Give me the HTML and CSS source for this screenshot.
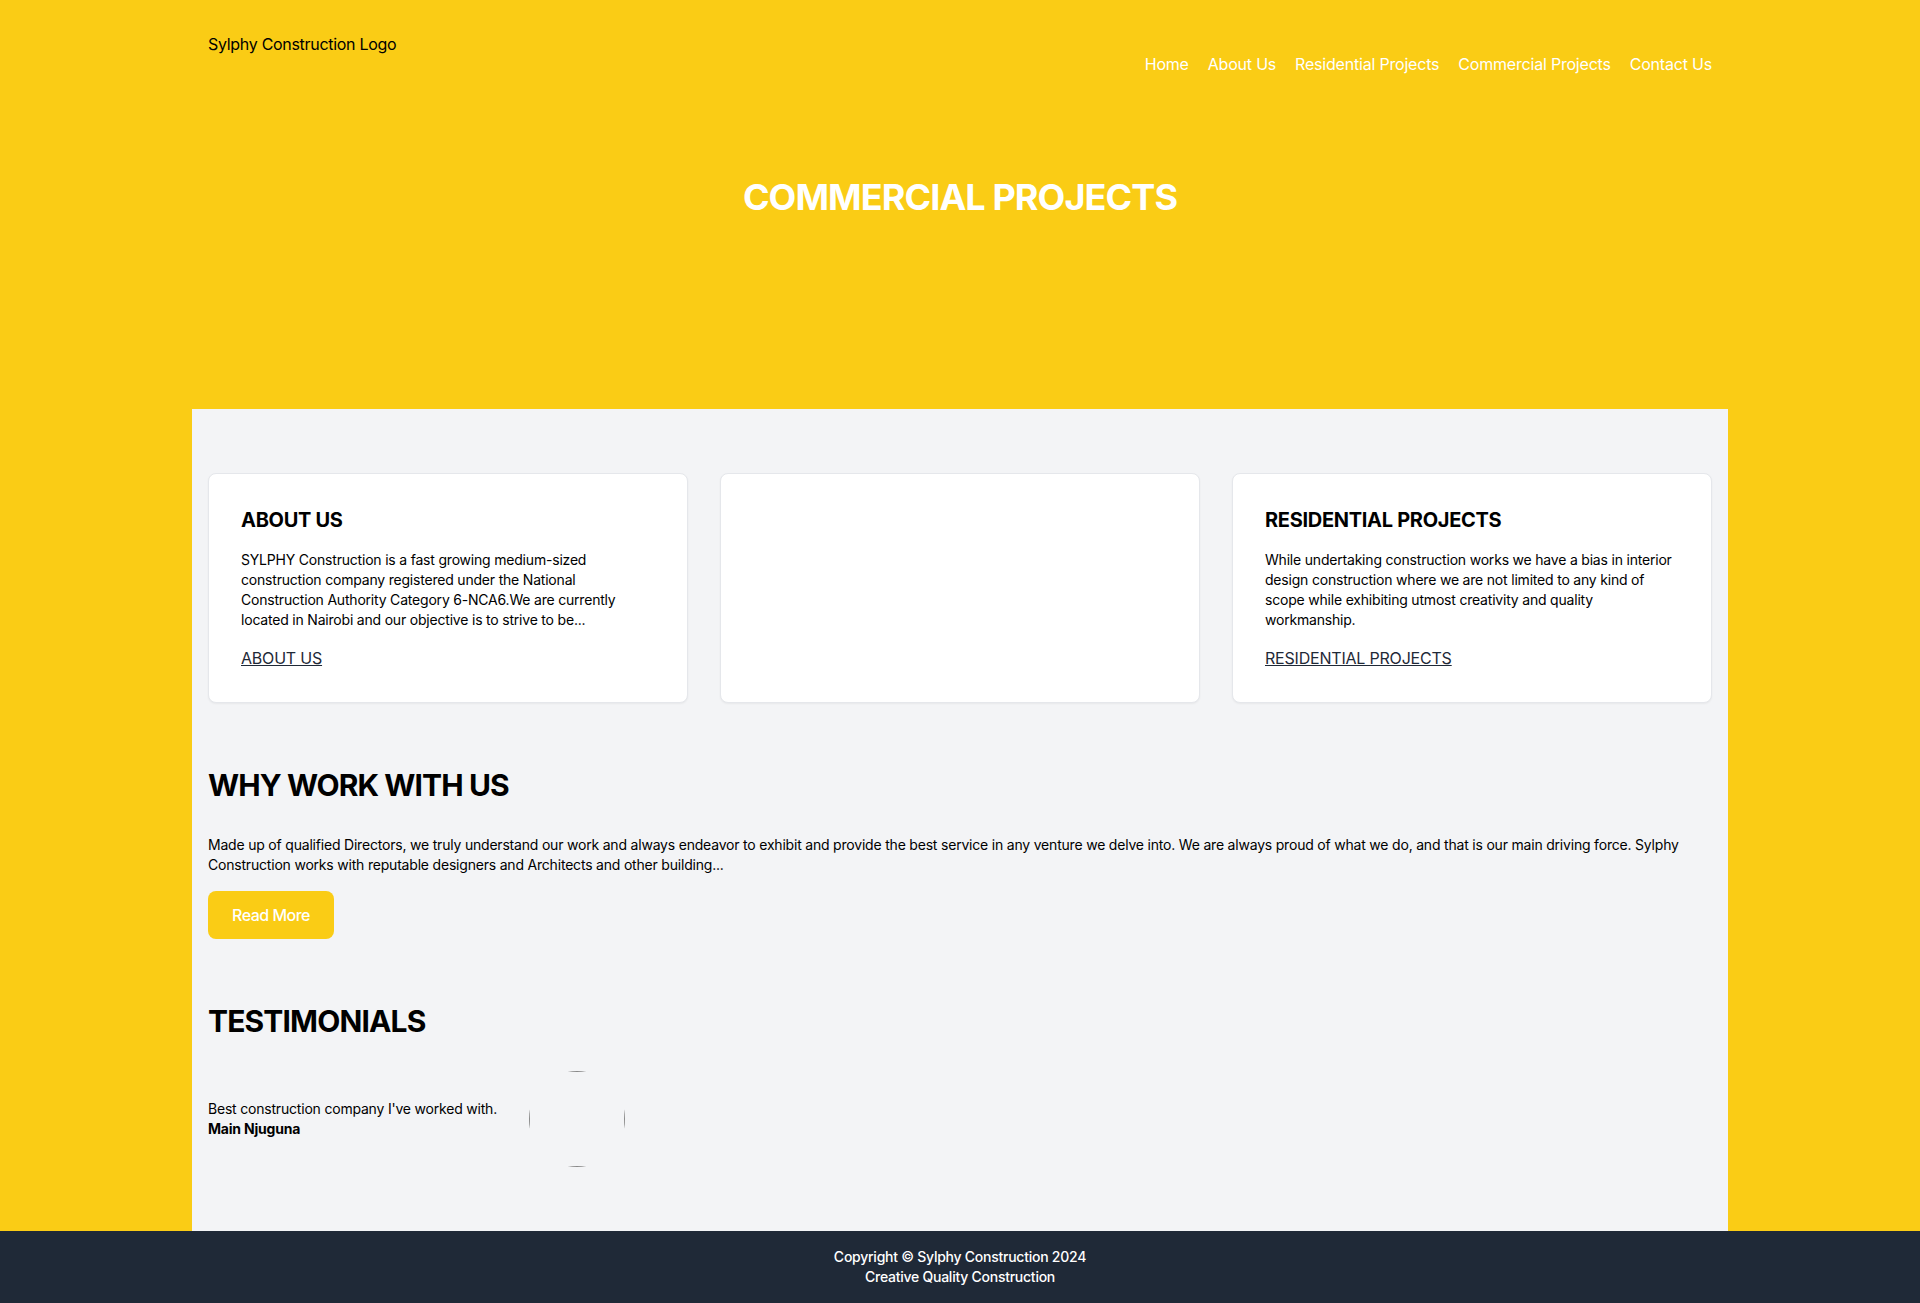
FILE: index.html
```html
<!DOCTYPE html>
<html lang="en">
<head>
<meta charset="utf-8">
<title>Commercial Projects - Sylphy Construction</title>
<link rel="stylesheet" href="styles.css">
</head>
<body>
<div class="page">
  <header class="site-header">
    <div class="logo">Sylphy Construction Logo</div>
    <nav class="nav">
      <a href="#">Home</a>
      <a href="#">About Us</a>
      <a href="#">Residential Projects</a>
      <a href="#">Commercial Projects</a>
      <a href="#">Contact Us</a>
    </nav>
  </header>
  <section class="hero">
    <h1 class="hero-title">COMMERCIAL PROJECTS</h1>
  </section>
  <main class="main">
    <section class="cards">
      <div class="card">
        <h2 class="card-title">ABOUT US</h2>
        <p class="card-text">SYLPHY Construction is a fast growing medium-sized construction company registered under the National Construction Authority Category 6-NCA6.We are currently located in Nairobi and our objective is to strive to be...</p>
        <a class="card-link" href="#">ABOUT US</a>
      </div>
      <div class="card"></div>
      <div class="card">
        <h2 class="card-title">RESIDENTIAL PROJECTS</h2>
        <p class="card-text">While undertaking construction works we have a bias in interior design construction where we are not limited to any kind of scope while exhibiting utmost creativity and quality workmanship.</p>
        <a class="card-link" href="#">RESIDENTIAL PROJECTS</a>
      </div>
    </section>
    <section class="section">
      <h2 class="section-title">WHY WORK WITH US</h2>
      <p class="section-text">Made up of qualified Directors, we truly understand our work and always endeavor to exhibit and provide the best service in any venture we delve into. We are always proud of what we do, and that is our main driving force. Sylphy Construction works with reputable designers and Architects and other building...</p>
      <a class="btn" href="#">Read More</a>
    </section>
    <section class="section">
      <h2 class="section-title section-title-tight">TESTIMONIALS</h2>
      <div class="testimonial">
        <div class="testimonial-body">
          <p class="quote">Best construction company I've worked with.</p>
          <p class="author">Main Njuguna</p>
        </div>
        <div class="avatar"><div class="avatar-frame"></div></div>
      </div>
    </section>
  </main>
</div>
<footer class="footer">
  <p>Copyright © Sylphy Construction 2024</p>
  <p>Creative Quality Construction</p>
</footer>
</body>
</html>
```

FILE: styles.css
```css
* { box-sizing: border-box; }
html, body { margin: 0; padding: 0; }
body {
  background: #facc15;
  font-family: Inter, "Noto Sans", "Liberation Sans", sans-serif;
  color: #000;
}
p, h1, h2 { margin: 0; }

.page {
  width: 1536px;
  margin: 0 auto;
}

.site-header {
  display: flex;
  justify-content: space-between;
  align-items: flex-start;
  padding: 32px 16px 0;
}
.logo {
  font-size: 16px;
  line-height: 24px;
  letter-spacing: -0.3px;
  color: #000;
}
.nav {
  display: flex;
  gap: 19px;
  margin-top: 20px;
}
.nav a {
  color: #fff;
  text-decoration: none;
  font-size: 16px;
  line-height: 24px;
  font-weight: 400;
  letter-spacing: -0.2px;
}

.hero {
  height: 333px;
  padding-top: 101px;
}
.hero-title {
  text-align: center;
  color: #fff;
  font-size: 36px;
  line-height: 40px;
  font-weight: 700;
  letter-spacing: -0.9px;
}

.main {
  background: #f3f4f6;
  padding: 32px 16px 32px;
}

.cards {
  display: grid;
  grid-template-columns: repeat(3, 1fr);
  gap: 32px;
  padding: 32px 0;
}
.card {
  background: #fff;
  border: 1px solid #e5e7eb;
  border-radius: 8px;
  box-shadow: 0 1px 2px rgba(0,0,0,0.05);
  padding: 32px 32px 30px;
  min-height: 230px;
}
.card-title {
  font-size: 20px;
  line-height: 28px;
  font-weight: 700;
  letter-spacing: -0.3px;
  margin-bottom: 16px;
}
.card-text {
  font-size: 14px;
  line-height: 20px;
  letter-spacing: -0.2px;
  margin-bottom: 16px;
  color: #000;
}
.card-link {
  display: inline-block;
  font-size: 16px;
  line-height: 24px;
  letter-spacing: -0.2px;
  color: #1f2937;
  text-decoration: underline;
}

.section {
  padding: 32px 0;
}
.section-title {
  font-size: 30px;
  line-height: 36px;
  font-weight: 700;
  letter-spacing: -0.9px;
  margin-bottom: 32px;
}
.section-title-tight {
  letter-spacing: -0.85px;
}
.section-text {
  font-size: 14px;
  line-height: 20px;
  letter-spacing: -0.2px;
  margin-bottom: 16px;
}
.btn {
  display: inline-block;
  background: #facc15;
  color: #fff;
  text-decoration: none;
  font-size: 16px;
  line-height: 24px;
  font-weight: 500;
  letter-spacing: -0.5px;
  padding: 12px 24px;
  border-radius: 8px;
}

.testimonial {
  display: flex;
  align-items: center;
  gap: 32px;
}
.quote {
  font-size: 14px;
  line-height: 20px;
  letter-spacing: -0.2px;
}
.author {
  font-size: 14px;
  line-height: 20px;
  font-weight: 700;
  letter-spacing: -0.2px;
}
.avatar {
  width: 96px;
  height: 96px;
  border-radius: 50%;
  overflow: hidden;
  flex-shrink: 0;
}
.avatar-frame {
  width: 96px;
  height: 96px;
  border: 1px solid #8a8a8a;
}

.footer {
  background: #1f2937;
  color: #fff;
  text-align: center;
  padding: 16px;
  font-size: 14px;
  line-height: 20px;
  font-weight: 500;
  letter-spacing: -0.25px;
}
```
